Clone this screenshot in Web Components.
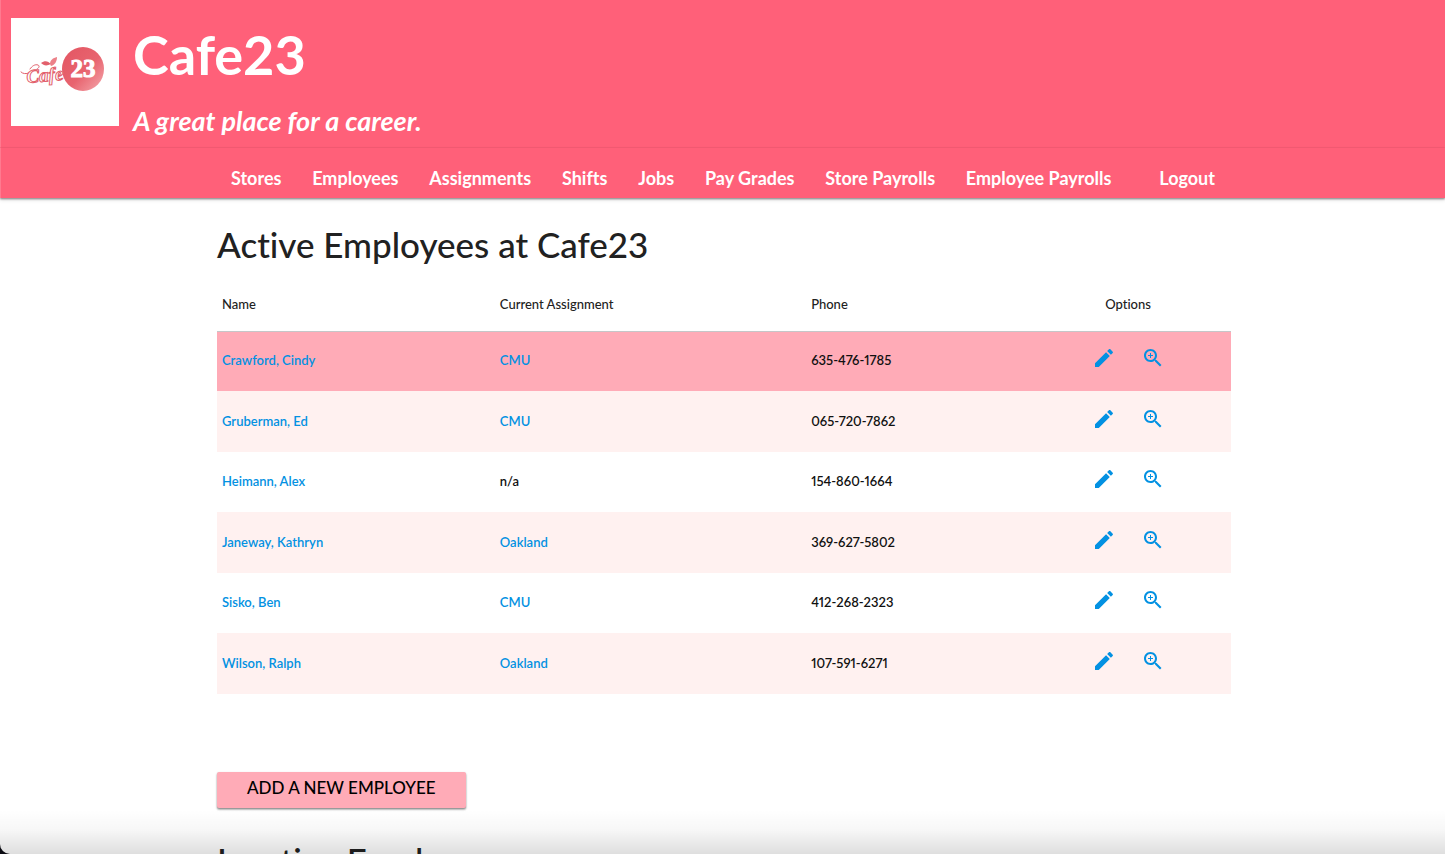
<!DOCTYPE html>
<html lang="en">
<head>
<meta charset="utf-8">
<meta name="viewport" content="width=device-width, initial-scale=1">
<title>Cafe23</title>
<style>
  html { background: #0b0b12; }
  body {
    margin: 0;
    font-family: Lato, "Open Sans", sans-serif;
    font-weight: 500;
    font-variant-ligatures: none;
    color: #212121;
    --brand: #ff6079;
    --brand-light: #ffabb7;
    --brand-pale: #fff1f0;
    --link: #0391e2;
  }
</style>
</head>
<body>
<cafe-page>
  <cafe-masthead slot="header">
    <cafe-logo slot="logo"></cafe-logo>
    <span slot="title">Cafe23</span>
    <span slot="tagline">A great place for a career.</span>
  </cafe-masthead>
  <cafe-nav slot="header"></cafe-nav>
  <cafe-heading>Active Employees at Cafe23</cafe-heading>
  <employee-table></employee-table>
  <cafe-button>ADD A NEW EMPLOYEE</cafe-button>
  <cafe-heading>Inactive Employees</cafe-heading>
</cafe-page>

<script>
class Base extends HTMLElement {
  constructor() {
    super();
    this.attachShadow({ mode: "open" }).innerHTML = this.render();
  }
}

customElements.define("cafe-page", class extends Base {
  render() {
    return `
    <style>
      :host { display: block; position: relative; box-sizing: border-box; height: 100vh; overflow: hidden;
              background: #fff; border-bottom-left-radius: 10px; }
      main { max-width: 1014px; width: 90%; margin: 0 auto; padding-left: 3px; }
      .fade { position: absolute; left: 0; right: 0; bottom: 0; height: 44px; pointer-events: none;
              background: linear-gradient(rgba(0,0,0,0), rgba(0,0,0,.03) 45%, rgba(0,0,0,.13)); }
    </style>
    <header><slot name="header"></slot></header>
    <main><slot></slot></main>
    <div class="fade"></div>`;
  }
});

customElements.define("cafe-masthead", class extends Base {
  render() {
    return `
    <style>
      :host { display: flex; gap: 14px; box-sizing: border-box; height: 148px; padding: 18px 10px 0;
              background: var(--brand); color: #fff; border-bottom: 1px solid #fc5e77; border-left: 1px solid #ff7a8f; }
      h1 { margin: 0; font-size: 54px; line-height: 74px; font-weight: 700; }
      p { margin: 13px 0 0; font-size: 27px; line-height: 32px; font-style: italic; font-weight: 700; }
    </style>
    <slot name="logo"></slot>
    <div>
      <h1><slot name="title"></slot></h1>
      <p><slot name="tagline"></slot></p>
    </div>`;
  }
});

customElements.define("cafe-logo", class extends Base {
  render() {
    return `
    <style>
      :host { display: block; flex: none; width: 108px; height: 108px; background: #fff; }
      svg { display: block; }
    </style>
    <svg width="108" height="108" viewBox="0 0 108 108" role="img" aria-label="Cafe 23">
      <defs><linearGradient id="g" x1="0" y1="0" x2="1" y2="1">
        <stop offset="0" stop-color="#e35562"/><stop offset=".55" stop-color="#e8646f"/><stop offset="1" stop-color="#f5a9ae"/>
      </linearGradient></defs>
      <ellipse cx="72" cy="51" rx="21" ry="22" fill="url(#g)"/>
      <text x="72" y="59" text-anchor="middle" font-family="'Liberation Serif', serif" font-weight="700" font-size="25" stroke="#fff" stroke-width="1" fill="#fff">23</text>
      <g fill="none" stroke="#e2606c" stroke-width="1" stroke-linecap="round">
        <path d="M10 54c2 2 5 2 8 1 M19 51c2-3 5-5 8-4 2 1 1 3-1 4"/>
      </g>
      <text x="16" y="65" transform="rotate(-5 16 65)" font-family="'Liberation Serif', serif" font-style="italic" font-weight="700" font-size="19" fill="#fff" stroke="#e2606c" stroke-width="1">Cafe</text>
      <path d="M30 45c4-3 7-2 10 1-4 2-7 2-10-1z" fill="#e2606c"/>
      <path d="M39 46c0-4 3-6 7-7 0 4-2 8-6 9z" fill="#ec8189"/>
    </svg>`;
  }
});

customElements.define("cafe-nav", class extends Base {
  render() {
    const names = ["Stores", "Employees", "Assignments", "Shifts", "Jobs", "Pay Grades", "Store Payrolls", "Employee Payrolls"];
    return `
    <style>
      :host { display: block; background: var(--brand); position: relative; border-left: 1px solid #ff7a8f;
              box-shadow: 0 1px 2px rgba(0,0,0,.45), 0 2px 4px rgba(0,0,0,.12); }
      ul { display: flex; justify-content: space-between; box-sizing: border-box; max-width: 1014px; width: 90%;
           margin: 0 auto; padding: 5px 15px 0; height: 50px; list-style: none; }
      li:last-child { margin-left: 17px; }
      a { color: #fff; text-decoration: none; font-size: 18px; line-height: 50px; font-weight: 700; white-space: nowrap; }
    </style>
    <nav><ul>${[...names, "Logout"].map(n => `<li><a href="#">${n}</a></li>`).join("")}</ul></nav>`;
  }
});

customElements.define("cafe-heading", class extends Base {
  render() {
    return `
    <style>
      :host { display: block; padding-top: 26px; }
      :host(:last-of-type) { padding-top: 32px; }
      h2 { margin: 0; font-size: 35px; line-height: 40px; font-weight: 500; white-space: nowrap; }
    </style>
    <h2><slot></slot></h2>`;
  }
});

customElements.define("employee-table", class extends Base {
  render() {
    const rows = [
      ["Crawford, Cindy", "CMU", "635-476-1785"],
      ["Gruberman, Ed", "CMU", "065-720-7862"],
      ["Heimann, Alex", "", "154-860-1664"],
      ["Janeway, Kathryn", "Oakland", "369-627-5802"],
      ["Sisko, Ben", "CMU", "412-268-2323"],
      ["Wilson, Ralph", "Oakland", "107-591-6271"]
    ];
    return `
    <style>
      :host { display: block; padding-top: 13px; }
      table { width: 100%; table-layout: fixed; border-collapse: collapse; font-size: 13px; line-height: 18px;
              font-variant-numeric: proportional-nums; }
      th, td { box-sizing: border-box; padding: 0 5px; text-align: left; }
      th { height: 54px; font-weight: 500; border-bottom: 1px solid #c6c6c8; }
      th:last-child, td:last-child { text-align: center; }
      td { height: 60px; padding-bottom: 2px; color: #111; font-weight: 600; }
      tr:nth-child(even) td { height: 61px; background: var(--brand-pale); }
      tbody tr:first-child td { background: var(--brand-light); }
      .name { width: 27.4%; } .place { width: 30.7%; } .phone { width: 21.6%; }
      a { color: var(--link); text-decoration: none; }
      .actions { display: flex; justify-content: center; gap: 25px; padding-bottom: 4px; }
      svg { display: block; width: 24px; height: 24px; fill: currentColor; }
    </style>
    <table>
      <colgroup><col class="name"><col class="place"><col class="phone"><col></colgroup>
      <thead><tr><th scope="col">Name</th><th scope="col">Current Assignment</th>
        <th scope="col">Phone</th><th scope="col">Options</th></tr></thead>
      <tbody>${rows.map(([n, p, t]) => `<tr>
        <td><a href="#">${n}</a></td>
        <td>${p ? `<a href="#">${p}</a>` : "n/a"}</td>
        <td>${t}</td>
        <td><div class="actions">
          <a href="#" aria-label="Edit ${n}"><svg viewBox="0 0 24 24"><path d="M3 17.250V21h3.750L17.810 9.940l-3.750-3.750L3 17.250zM20.710 7.040c.39-.39.39-1.020 0-1.410l-2.340-2.340c-.39-.39-1.020-.39-1.410 0l-1.830 1.830 3.750 3.750 1.830-1.830z"/></svg></a>
          <a href="#" aria-label="View ${n}"><svg viewBox="0 0 24 24"><path d="M15.500 14h-.79l-.28-.27C15.410 12.590 16 11.110 16 9.500 16 5.910 13.090 3 9.500 3S3 5.910 3 9.500 5.910 16 9.500 16c1.610 0 3.090-.59 4.230-1.570l.27.28v.79l5 4.990L20.490 19l-4.990-5zm-6 0C7.010 14 5 11.990 5 9.500S7.010 5 9.500 5 14 7.010 14 9.500 11.990 14 9.500 14zm2.500-4h-2v2H9v-2H7V9h2V7h1v2h2v1z"/></svg></a>
        </div></td></tr>`).join("")}</tbody>
    </table>`;
  }
});

customElements.define("cafe-button", class extends Base {
  render() {
    return `
    <style>
      :host { display: block; padding-top: 78px; }
      button { display: block; height: 36px; margin: 0; padding: 0 30px 4px; border: 0; border-radius: 2px; font: inherit;
               font-size: 17px; line-height: 32px; color: #000; background: var(--brand-light);
               box-shadow: 0 2px 2px rgba(0,0,0,.2), 0 1px 2px rgba(0,0,0,.35); cursor: pointer; }
    </style>
    <button type="button"><slot></slot></button>`;
  }
});
</script>
</body>
</html>
